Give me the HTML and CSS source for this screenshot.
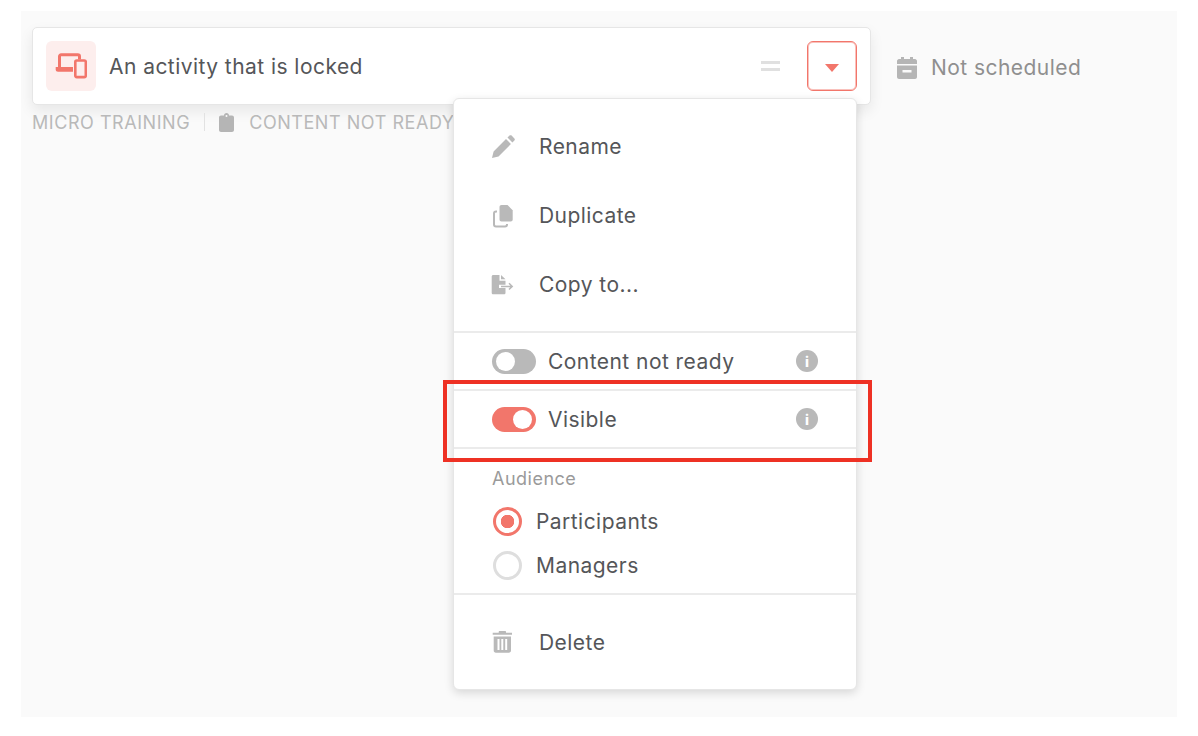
FILE: index.html
```html
<!DOCTYPE html>
<html lang="en">
<head>
<meta charset="utf-8">
<title>Activity menu</title>
<link rel="stylesheet" href="styles.css">
</head>
<body>
<main class="panel">
  <div class="top-row">
    <div class="card">
      <div class="type-icon">
        <svg width="32" height="28" viewBox="0 0 32 28" fill="none"><path d="M4.500 15.500V4.500C4.500 3.500 5.200 2.800 6.200 2.800H22.800C23.800 2.800 24.500 3.500 24.500 4.500V7.500" stroke="#f2766b" stroke-width="3"/><path d="M.7 15H18V19.700H3C1.700 19.700.7 18.700.7 17.400Z" fill="#f2766b"/><rect x="20.300" y="8.500" width="10.500" height="16.600" rx="1.500" stroke="#f2766b" stroke-width="2.600"/></svg>
      </div>
      <div class="card-title">An activity that is locked</div>
      <div class="handle"></div>
      <button class="caret-btn" type="button"><span class="caret"></span></button>
    </div>
    <div class="schedule">
      <svg width="20" height="22" viewBox="0 0 20 22"><path d="M4 0h3v2h6V0h3v2h2c1 0 2 1 2 2v3H0V4c0-1 1-2 2-2h2zM0 8.500h20V20c0 1-1 2-2 2H2c-1 0-2-1-2-2zM5.500 13v2.500h9V13z" fill="#b5b5b5" fill-rule="evenodd"/></svg>
      <span>Not scheduled</span>
    </div>
  </div>
  <div class="meta">
    <span>MICRO TRAINING</span>
    <span class="meta-sep"></span>
    <svg width="15" height="19" viewBox="0 0 15 19"><path d="M5 2.500C5 1 6 0 7.500 0S10 1 10 2.500H13c1.100 0 2 .9 2 2V17c0 1.100-.9 2-2 2H2c-1.100 0-2-.9-2-2V4.500c0-1.100.9-2 2-2z" fill="#b5b5b5"/><circle cx="7.500" cy="3" r="1" fill="#fafafa"/></svg>
    <span class="meta-status">CONTENT NOT READY</span>
  </div>

  <div class="menu">
    <div class="menu-actions">
      <div class="action">
        <svg class="action-icon" width="24" height="24" viewBox="0 0 24 24"><path d="M1 23l1.600-6.500L15 4.100 19.900 9 7.500 21.400zM16.500 2.600l2-2c.6-.6 1.500-.6 2.100 0l2.800 2.800c.6.6.6 1.500 0 2.100l-2 2z" fill="#b9b9b9"/></svg>
        <span>Rename</span>
      </div>
      <div class="action">
        <svg class="action-icon" width="24" height="24" viewBox="0 0 24 24"><path d="M8.500 3C8.500 1.800 9.300 1 10.500 1H16.500L21.700 6.200V15.500C21.700 16.700 20.900 17.500 19.700 17.500H10.500C9.300 17.500 8.500 16.700 8.500 15.500Z" fill="#b9b9b9"/><path d="M6 7.500H5C3.900 7.500 3 8.400 3 9.500V20.500C3 21.600 3.900 22.500 5 22.500H14C15.100 22.500 16 21.600 16 20.500V20" fill="none" stroke="#b9b9b9" stroke-width="2"/></svg>
        <span>Duplicate</span>
      </div>
      <div class="action">
        <svg class="action-icon" width="24" height="24" viewBox="0 0 24 24"><path d="M.7 3.500C.7 2.600 1.400 2 2.300 2H8.500V7.800H14.500V11.800H8V15H14.500V19.700C14.500 20.600 13.800 21.300 12.900 21.300H2.300C1.400 21.300.7 20.600.7 19.700ZM10 2L14.500 6.300H10Z" fill="#b9b9b9"/><path d="M10 13.400H21M18 10.300L21.200 13.400 18 16.500" fill="none" stroke="#b9b9b9" stroke-width="1.500"/></svg>
        <span>Copy to...</span>
      </div>
    </div>
    <div class="toggle-row">
      <span class="toggle"><span class="knob"></span></span>
      <span class="toggle-label">Content not ready</span>
      <span class="info">i</span>
    </div>
    <div class="toggle-row">
      <span class="toggle toggle-on"><span class="knob"></span></span>
      <span class="toggle-label">Visible</span>
      <span class="info">i</span>
    </div>
    <div class="audience">
      <div class="audience-title">Audience</div>
      <div class="radio-row"><span class="radio radio-on"></span><span>Participants</span></div>
      <div class="radio-row"><span class="radio"></span><span>Managers</span></div>
    </div>
    <div class="menu-delete">
      <div class="action">
        <svg class="action-icon" width="24" height="24" viewBox="0 1 24 24"><path d="M1.700 2.700h6V2c0-.8.500-1.300 1.300-1.300h4.700c.8 0 1.300.5 1.300 1.300v.7h6v2H1.700zM2.700 6.500h17.300v14c0 1.300-.9 2.200-2.200 2.200H4.900c-1.300 0-2.200-.9-2.200-2.200zM6.500 9v11h2V9zM10.300 9v11h2V9zM14.200 9v11h2V9z" fill="#b9b9b9" fill-rule="evenodd"/></svg>
        <span>Delete</span>
      </div>
    </div>
  </div>
  <div class="highlight"></div>
</main>
</body>
</html>
```

FILE: styles.css
```css
* { box-sizing: border-box; }

html, body { margin: 0; background: #fff; }

body {
  font-family: Inter, "Liberation Sans", sans-serif;
  color: #555659;
  padding: 11px 21px 19px;
}

.panel {
  position: relative;
  height: 706px;
  background: #fafafa;
  padding: 16px 11px;
}

.top-row {
  display: flex;
  align-items: center;
}

.card {
  width: 839px;
  height: 78px;
  display: flex;
  align-items: center;
  padding: 0 13px;
  background: #fff;
  border: 1px solid #e6e6e6;
  border-radius: 5px;
  box-shadow: 0 6px 14px rgba(0, 0, 0, 0.08);
}

.type-icon {
  width: 50px;
  height: 50px;
  flex: none;
  display: flex;
  align-items: center;
  justify-content: center;
  background: #fdeeed;
  border-radius: 6px;
}

.card-title {
  flex: 1;
  margin: 1px 0 0 13px;
  font-size: 21px;
  letter-spacing: 0.45px;
  line-height: 26px;
}

.handle {
  width: 19px;
  height: 10px;
  margin-right: 27px;
  border-top: 3px solid #e0e0e0;
  border-bottom: 3px solid #e0e0e0;
}

.caret-btn {
  width: 50px;
  height: 50px;
  padding: 0;
  display: flex;
  align-items: center;
  justify-content: center;
  background: #fff;
  border: 1px solid #f2766b;
  border-radius: 6px;
  box-shadow: inset 0 0 0 1px rgba(242, 118, 107, 0.45);
}

.caret {
  margin-top: 3px;
  border-style: solid;
  border-width: 8px 7px 0;
  border-color: #f2766b transparent transparent;
}

.schedule {
  display: flex;
  align-items: center;
  gap: 14px;
  margin: 3px 0 0 26px;
  font-size: 21px;
  letter-spacing: 0.45px;
  color: #8f8f8f;
}

.meta {
  display: flex;
  align-items: center;
  margin-top: 6px;
  height: 22px;
  font-size: 18px;
  letter-spacing: 0.55px;
  color: #b9b9b9;
}

.meta-sep {
  width: 1px;
  height: 18px;
  margin: 0 14px;
  background: #e2e2e2;
}

.meta-status { margin-left: 15px; white-space: nowrap; }

.menu {
  position: absolute;
  left: 432px;
  top: 87px;
  width: 404px;
  height: 592px;
  background: #fff;
  border: 1px solid #e6e6e6;
  border-radius: 6px;
  box-shadow: 0 3px 10px rgba(0, 0, 0, 0.14);
  font-size: 21px;
  letter-spacing: 0.45px;
}

.menu-actions {
  height: 234px;
  padding-top: 13px;
  border-bottom: 2px solid #ebebeb;
}

.action {
  height: 69px;
  display: flex;
  align-items: center;
  padding-left: 37px;
  gap: 24px;
}

.action-icon { flex: none; }

.toggle-row {
  height: 58px;
  display: flex;
  align-items: center;
  padding: 0 38px;
  border-bottom: 2px solid #ebebeb;
}

.toggle {
  width: 44px;
  height: 25px;
  flex: none;
  padding: 3px 4px;
  display: flex;
  background: #b9b9b9;
  border-radius: 13px;
}

.toggle-on {
  justify-content: flex-end;
  background: #f2766b;
}

.knob {
  width: 19px;
  height: 19px;
  background: #fff;
  border-radius: 50%;
}

.toggle-label {
  flex: 1;
  margin-left: 12px;
}

.info {
  width: 22px;
  height: 22px;
  display: flex;
  align-items: center;
  justify-content: center;
  background: #b9b9b9;
  border-radius: 50%;
  color: #fff;
  font-size: 14px;
  font-weight: 800;
  letter-spacing: 0;
}

.audience {
  height: 146px;
  padding: 19px 0 0 38px;
  border-bottom: 2px solid #ebebeb;
}

.audience-title {
  font-size: 18px;
  letter-spacing: 0.5px;
  line-height: 22px;
  color: #9a9a9a;
}

.radio-row {
  height: 44px;
  display: flex;
  align-items: center;
  gap: 14px;
}

.audience-title + .radio-row { margin-top: 9px; }

.radio {
  width: 29px;
  height: 29px;
  flex: none;
  margin-left: 1px;
  border: 3px solid #dedede;
  border-radius: 50%;
}

.radio-on {
  border-color: #f2766b;
  background: radial-gradient(circle, #f2766b 0 6.500px, #fff 7px);
}

.menu-delete { padding-top: 13px; }

.highlight {
  position: absolute;
  left: 422px;
  top: 369px;
  width: 429px;
  height: 82px;
  border: 4px solid #ee3124;
}
```
